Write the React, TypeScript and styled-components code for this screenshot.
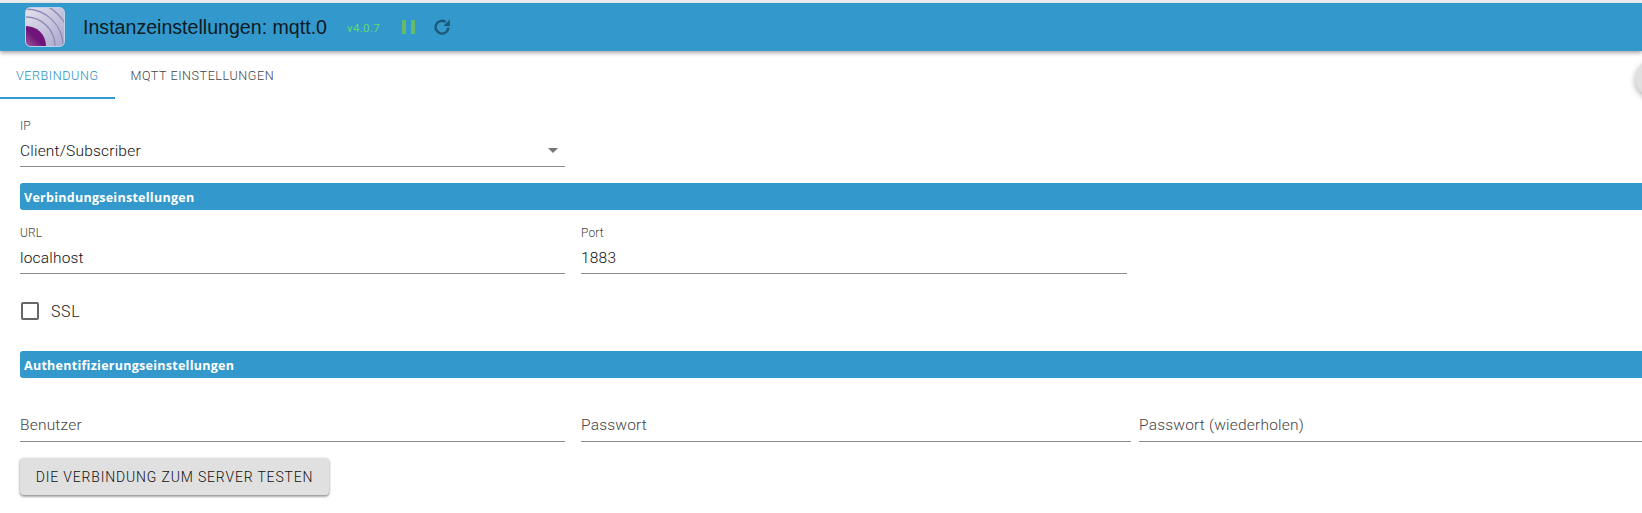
import React from "react";
import styled, { createGlobalStyle } from "styled-components";

const GlobalStyle = createGlobalStyle`
  html, body {
    margin: 0;
    padding: 0;
    background: #fff;
    overflow: hidden;
    font-family: Roboto, "Liberation Sans", sans-serif;
  }
`;

const Page = styled.div`
  position: relative;
  width: 1642px;
  height: 513px;
  padding-top: 3px;
  box-sizing: border-box;
  background: linear-gradient(#eeeeee 3px, #ffffff 3px);
  overflow: hidden;
`;

const Header = styled.header`
  position: relative;
  z-index: 1;
  height: 48px;
  display: flex;
  align-items: center;
  background: #3399cc;
  box-shadow: 0 2px 4px rgba(0, 0, 0, 0.35);
  padding-left: 25px;
`;

const Logo = styled.svg`
  width: 40px;
  height: 40px;
  flex: none;
`;

const Title = styled.h1`
  margin: 0 0 0 18px;
  font: 400 19.6px "Liberation Sans", Arial, sans-serif;
  color: #0c1a22;
`;

const Version = styled.span`
  margin-left: 20px;
  font-size: 11.5px;
  letter-spacing: 0.35px;
  color: #63d86b;
  position: relative;
  top: 1px;
`;

const Pause = styled.span`
  margin-left: 22px;
  width: 13px;
  height: 14px;
  display: flex;
  justify-content: space-between;

  i {
    width: 4px;
    background: #66bb6a;
  }
`;

const ReloadIcon = styled.svg`
  margin-left: 19px;
  width: 16px;
  height: 16px;
  flex: none;
  color: #1d5878;
`;

const Tabs = styled.nav`
  height: 48px;
  display: flex;
`;

const Tab = styled.div<{ $active?: boolean }>`
  box-sizing: border-box;
  height: 48px;
  padding: 2px 16px 0;
  display: flex;
  align-items: center;
  font-size: 12.6px;
  font-weight: 300;
  letter-spacing: 0.55px;
  text-transform: uppercase;
  color: ${(p) => (p.$active ? "#2a8fc6" : "#444444")};
  border-bottom: 2px solid ${(p) => (p.$active ? "#3399cc" : "transparent")};
`;

const Fab = styled.div`
  position: absolute;
  left: 1635px;
  top: 60px;
  width: 36px;
  height: 36px;
  border-radius: 50%;
  background: #e0e0e0;
  box-shadow: 0 3px 6px rgba(0, 0, 0, 0.3);
`;

const Form = styled.main`
  padding: 16px 0 0 20px;
`;

const Row = styled.div<{ $top?: number }>`
  display: flex;
  margin-top: ${(p) => p.$top ?? 0}px;
`;

const Field = styled.div<{ $width: number; $gap?: number; $tall?: boolean }>`
  position: relative;
  box-sizing: border-box;
  width: ${(p) => p.$width}px;
  margin-right: ${(p) => p.$gap ?? 16}px;
  height: ${(p) => (p.$tall ? 64 : 52)}px;
  border-bottom: 1px solid #8c8c8c;
  flex: none;
`;

const Label = styled.label`
  display: block;
  height: 24px;
  padding-top: 4px;
  box-sizing: border-box;
  font-size: 12px;
  font-weight: 300;
  letter-spacing: 0.15px;
  line-height: 14px;
  color: #444444;
`;

const Value = styled.div`
  font-size: 15.5px;
  font-weight: 300;
  letter-spacing: 0.2px;
  line-height: 24px;
  color: #111111;
`;

const Placeholder = styled.div`
  padding-top: 35px;
  font-size: 15.5px;
  font-weight: 300;
  letter-spacing: 0.2px;
  line-height: 24px;
  color: #444444;
`;

const Caret = styled.span`
  position: absolute;
  right: 7px;
  bottom: 13px;
  border-left: 5px solid transparent;
  border-right: 5px solid transparent;
  border-top: 5px solid #757575;
`;

const SectionBar = styled.div<{ $top: number }>`
  box-sizing: border-box;
  height: 27px;
  margin-top: ${(p) => p.$top}px;
  padding: 1px 0 0 4px;
  display: flex;
  align-items: center;
  background: #3399cc;
  border-radius: 3px 0 0 3px;
  font: 700 12.5px "Open Sans", sans-serif;
  letter-spacing: 0.27px;
  color: #ffffff;
`;

const CheckRow = styled.div`
  display: flex;
  align-items: center;
  height: 18px;
  margin-top: 28px;
  margin-left: 1px;
`;

const Box = styled.span`
  box-sizing: border-box;
  width: 18px;
  height: 18px;
  border: 2px solid #666666;
  border-radius: 2px;
`;

const CheckText = styled.span`
  margin-left: 12px;
  font-size: 16px;
  font-weight: 300;
  letter-spacing: 0.6px;
  color: #222222;
`;

const Button = styled.button`
  display: block;
  box-sizing: border-box;
  width: 309px;
  height: 37px;
  margin-top: 16px;
  padding: 0;
  border: 0;
  border-radius: 4px;
  background: #e0e0e0;
  box-shadow: 0 1px 3px rgba(0, 0, 0, 0.4), 0 2px 2px rgba(0, 0, 0, 0.14);
  font-family: Roboto, sans-serif;
  font-size: 14px;
  font-weight: 300;
  letter-spacing: 0.83px;
  text-transform: uppercase;
  color: #111111;
`;

const AppLogo = () => (
  <Logo viewBox="0 0 40 40">
    <defs>
      <linearGradient id="bg" x1="0" y1="0" x2="1" y2="1">
        <stop offset="0" stopColor="#e6e3ee" />
        <stop offset="1" stopColor="#a9a6cc" />
      </linearGradient>
      <linearGradient id="core" x1="0" y1="1" x2="0.9" y2="0.1">
        <stop offset="0.5" stopColor="#ab6aa6" />
        <stop offset="0.8" stopColor="#701479" />
      </linearGradient>
      <clipPath id="tile">
        <rect x="0.5" y="0.5" width="39" height="39" rx="5" />
      </clipPath>
    </defs>
    <g clipPath="url(#tile)">
      <rect width="40" height="40" fill="url(#bg)" />
      <g fill="none" stroke="#8f8bb8" strokeWidth="1.3">
        <circle cx="1" cy="39" r="29" />
        <circle cx="1" cy="39" r="37" />
        <circle cx="1" cy="39" r="45" />
      </g>
      <circle cx="1" cy="39" r="20" fill="url(#core)" />
    </g>
    <rect x="0.5" y="0.5" width="39" height="39" rx="5" fill="none" stroke="#b9d3ea" />
  </Logo>
);

export default function App() {
  return (
    <Page>
      <GlobalStyle />
      <Header>
        <AppLogo />
        <Title>Instanzeinstellungen: mqtt.0</Title>
        <Version>v4.0.7</Version>
        <Pause>
          <i />
          <i />
        </Pause>
        <ReloadIcon viewBox="0 0 16 16">
          <path d="M14.4 8.6 A6.4 6.4 0 1 1 11.6 2.9" fill="none" stroke="currentColor" strokeWidth="2.4" />
          <polygon points="15.8,0.6 15.8,7 9.4,7" fill="currentColor" />
        </ReloadIcon>
      </Header>
      <Tabs>
        <Tab $active>Verbindung</Tab>
        <Tab>MQTT Einstellungen</Tab>
      </Tabs>
      <Fab />
      <Form>
        <Row>
          <Field $width={545}>
            <Label>IP</Label>
            <Value>Client/Subscriber</Value>
            <Caret />
          </Field>
        </Row>
        <SectionBar $top={16}>Verbindungseinstellungen</SectionBar>
        <Row $top={12}>
          <Field $width={545}>
            <Label>URL</Label>
            <Value>localhost</Value>
          </Field>
          <Field $width={546}>
            <Label>Port</Label>
            <Value>1883</Value>
          </Field>
        </Row>
        <CheckRow>
          <Box />
          <CheckText>SSL</CheckText>
        </CheckRow>
        <SectionBar $top={31}>Authentifizierungseinstellungen</SectionBar>
        <Row>
          <Field $width={545} $tall>
            <Placeholder>Benutzer</Placeholder>
          </Field>
          <Field $width={550} $gap={8} $tall>
            <Placeholder>Passwort</Placeholder>
          </Field>
          <Field $width={503} $gap={0} $tall>
            <Placeholder>Passwort (wiederholen)</Placeholder>
          </Field>
        </Row>
        <Button>Die Verbindung zum Server testen</Button>
      </Form>
    </Page>
  );
}
